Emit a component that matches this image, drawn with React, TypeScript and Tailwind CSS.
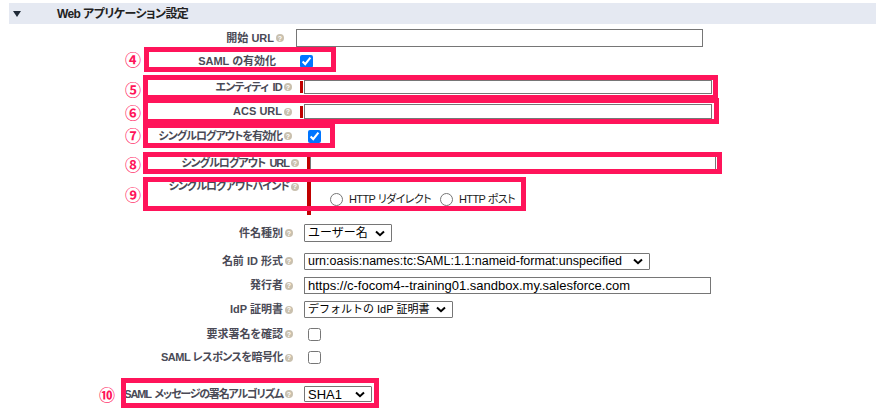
import React from "react";

const labelCls =
  "flex shrink-0 items-center justify-end whitespace-nowrap text-[11px] font-bold leading-none text-[#4a4a56] [font-feature-settings:'palt']";

function Help() {
  return (
    <span className="ml-[2px] inline-flex h-[8px] w-[8px] items-center justify-center rounded-full bg-[#c9c0ae] text-[7px] font-bold leading-none tracking-normal text-white">
      ?
    </span>
  );
}

function Chevron() {
  return (
    <svg width="10" height="7" viewBox="0 0 10 7" className="shrink-0">
      <path d="M1 1.5 L5 5.2 L9 1.5" fill="none" stroke="#000" strokeWidth="2" />
    </svg>
  );
}

function FakeSelect({
  value,
  width,
  height,
  size = "text-[13px]",
}: {
  value: string;
  width: string;
  height: string;
  size?: string;
}) {
  return (
    <div
      className={`flex shrink-0 items-center justify-between rounded-[1px] border border-[#767676] bg-white pl-[3px] pr-[6px] leading-none text-black ${width} ${height} ${size}`}
    >
      <span className="whitespace-nowrap">{value}</span>
      <Chevron />
    </div>
  );
}

function TextBox({ value = "", cls }: { value?: string; cls: string }) {
  return (
    <input
      readOnly
      value={value}
      className={`shrink-0 border border-[#767676] bg-white px-[3px] text-[13px] leading-none text-black outline-none ${cls}`}
    />
  );
}

function Req({ cls }: { cls: string }) {
  return <div className={`shrink-0 bg-[#c00000] ${cls}`} />;
}

const boxes = [
  "left-[144px] top-[47px] w-[192px] h-[25px]",
  "left-[143px] top-[75px] w-[575px] h-[25px]",
  "left-[143px] top-[98px] w-[576px] h-[26px]",
  "left-[143px] top-[123px] w-[192px] h-[25px]",
  "left-[143px] top-[152px] w-[579px] h-[22px]",
  "left-[143px] top-[177px] w-[383px] h-[34px]",
  "left-[121px] top-[378px] w-[258px] h-[30px]",
];

const marks = [
  { n: "④", pos: "left-[125px] top-[51px]" },
  { n: "⑤", pos: "left-[125px] top-[81px]" },
  { n: "⑥", pos: "left-[125px] top-[104px]" },
  { n: "⑦", pos: "left-[125px] top-[127px]" },
  { n: "⑧", pos: "left-[125px] top-[156px]" },
  { n: "⑨", pos: "left-[125px] top-[186px]" },
  { n: "⑩", pos: "left-[99px] top-[386px]" },
];

export default function App() {
  return (
    <div className="relative h-[417px] w-[877px] overflow-hidden bg-white pt-[3px] font-['Liberation_Sans','Noto_Sans_CJK_JP',sans-serif]">
      {/* section header */}
      <div className="ml-[9px] mr-[1px] flex h-[21px] items-center bg-[#e5e9f2]">
        <svg width="8" height="6" viewBox="0 0 8 6" className="ml-[4px]">
          <polygon points="0,0 8,0 4,6" fill="#1f2937" />
        </svg>
        <span className="ml-[36px] text-[12px] font-bold tracking-[-0.6px] text-[#222] [font-feature-settings:'palt']">
          Web アプリケーション設定
        </span>
      </div>

      <div className="mt-[3px] flex h-[22px] items-center">
        <div className={`${labelCls} w-[284px]`}>
          開始 URL
          <Help />
        </div>
        <TextBox cls="ml-[12px] h-[18px] w-[407px]" />
      </div>

      <div className="flex h-[24px] items-center">
        <div className={`${labelCls} w-[276px]`}>SAML の有効化</div>
        <input type="checkbox" defaultChecked className="ml-[24px] h-[13px] w-[13px]" />
      </div>

      <div className="flex h-[28px] items-center">
        <div className={`${labelCls} w-[292px] tracking-[-0.8px]`}>
          エンティティ&nbsp; ID
          <Help />
        </div>
        <Req cls="ml-[8px] h-[12px] w-[3px]" />
        <TextBox cls="ml-[1px] h-[14px] w-[408px]" />
      </div>

      <div className="flex h-[21px] items-center">
        <div className={`${labelCls} w-[292px]`}>
          ACS URL
          <Help />
        </div>
        <Req cls="ml-[8px] h-[12px] w-[3px]" />
        <TextBox cls="ml-[1px] h-[15px] w-[408px]" />
      </div>

      <div className="flex h-[28px] items-center">
        <div className={`${labelCls} w-[292px] tracking-[-1px]`}>
          シングルログアウトを有効化
          <Help />
        </div>
        <input type="checkbox" defaultChecked className="ml-[16px] h-[13px] w-[13px]" />
      </div>

      <div className="flex h-[26px] items-center">
        <div className={`${labelCls} w-[299px] tracking-[-1px]`}>
          シングルログアウト&nbsp; URL
          <Help />
        </div>
        <Req cls="ml-[8px] h-[13px] w-[3px]" />
        <TextBox cls="h-[14px] w-[406px]" />
      </div>

      <div className="flex h-[44px] items-start">
        <div className={`${labelCls} w-[299px] pt-[5px] tracking-[-1px]`}>
          シングルログアウトバインド
          <Help />
        </div>
        <Req cls="ml-[8px] mt-[6px] h-[33px] w-[4px]" />
        <div className="ml-[19px] mt-[17px] flex items-center text-[11px] leading-none text-[#222] [font-feature-settings:'palt']">
          <input type="radio" name="slo" className="h-[13px] w-[13px]" />
          <span className="ml-[6px] tracking-[-0.6px]">HTTP&nbsp;リダイレクト</span>
          <input type="radio" name="slo" className="ml-[9px] h-[13px] w-[13px]" />
          <span className="ml-[6px] tracking-[-0.6px]">HTTP&nbsp;ポスト</span>
        </div>
      </div>

      <div className="flex h-[26px] items-center">
        <div className={`${labelCls} w-[293px]`}>
          件名種別
          <Help />
        </div>
        <FakeSelect value="ユーザー名" width="ml-[11px] w-[88px]" height="h-[18px]" size="text-[12px]" />
      </div>

      <div className="flex h-[30px] items-center">
        <div className={`${labelCls} w-[293px]`}>
          名前 ID 形式
          <Help />
        </div>
        <FakeSelect
          value="urn:oasis:names:tc:SAML:1.1:nameid-format:unspecified"
          width="ml-[11px] w-[346px]"
          height="h-[17px]"
          size="text-[12.5px]"
        />
      </div>

      <div className="flex h-[19px] items-center">
        <div className={`${labelCls} w-[293px]`}>
          発行者
          <Help />
        </div>
        <TextBox
          value="https://c-focom4--training01.sandbox.my.salesforce.com"
          cls="ml-[11px] h-[17px] w-[407px]"
        />
      </div>

      <div className="flex h-[29px] items-center">
        <div className={`${labelCls} w-[293px]`}>
          IdP 証明書
          <Help />
        </div>
        <FakeSelect value="デフォルトの IdP 証明書" width="ml-[11px] w-[149px]" height="h-[17px]" size="text-[11px]" />
      </div>

      <div className="flex h-[20px] items-center">
        <div className={`${labelCls} w-[293px]`}>
          要求署名を確認
          <Help />
        </div>
        <input type="checkbox" className="ml-[15px] h-[13px] w-[13px]" />
      </div>

      <div className="flex h-[27px] items-center">
        <div className={`${labelCls} w-[293px] tracking-[-0.5px]`}>
          SAML レスポンスを暗号化
          <Help />
        </div>
        <input type="checkbox" className="ml-[15px] h-[13px] w-[13px]" />
      </div>

      <div className="flex h-[46px] items-center">
        <div className={`${labelCls} w-[293px] tracking-[-1.2px]`}>
          SAML&nbsp; メッセージの署名アルゴリズム
          <Help />
        </div>
        <FakeSelect value="SHA1" width="ml-[11px] w-[68px]" height="h-[16px]" />
      </div>

      {/* annotation overlay */}
      {boxes.map((b, i) => (
        <div key={i} className={`pointer-events-none absolute border-[5px] border-[#ff145a] ${b}`} />
      ))}
      {marks.map((m) => (
        <div
          key={m.n}
          className={`pointer-events-none absolute flex h-[16px] w-[16px] items-center justify-center font-['Noto_Sans_CJK_JP',sans-serif] text-[16px] font-bold leading-none text-[#ff145a] ${m.pos}`}
        >
          {m.n}
        </div>
      ))}
    </div>
  );
}
